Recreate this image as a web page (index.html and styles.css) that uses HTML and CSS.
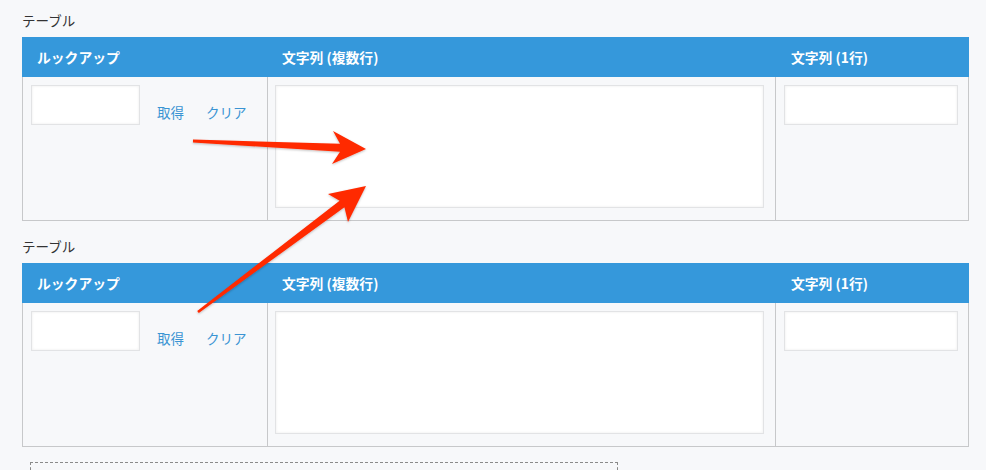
FILE: index.html
```html
<!DOCTYPE html>
<html lang="ja">
<head>
<meta charset="utf-8">
<link rel="stylesheet" href="styles.css">
</head>
<body>
<div class="page">
  <section class="subtable">
    <div class="label">テーブル</div>
    <div class="table">
      <div class="th">ルックアップ</div>
      <div class="th">文字列 (複数行)</div>
      <div class="th">文字列 (1行)</div>
      <div class="td lookup">
        <div class="input short"></div>
        <a class="link first">取得</a>
        <a class="link">クリア</a>
      </div>
      <div class="td mid"><div class="input area"></div></div>
      <div class="td last"><div class="input single"></div></div>
    </div>
  </section>
  <section class="subtable">
    <div class="label">テーブル</div>
    <div class="table">
      <div class="th">ルックアップ</div>
      <div class="th">文字列 (複数行)</div>
      <div class="th">文字列 (1行)</div>
      <div class="td lookup">
        <div class="input short"></div>
        <a class="link first">取得</a>
        <a class="link">クリア</a>
      </div>
      <div class="td mid"><div class="input area"></div></div>
      <div class="td last"><div class="input single"></div></div>
    </div>
  </section>
  <div class="dropzone"></div>
</div>
<svg class="arrows" width="986" height="470" viewBox="0 0 986 470">
  <defs>
    <filter id="sh" x="-10%" y="-10%" width="120%" height="130%">
      <feDropShadow dx="0" dy="1" stdDeviation="1" flood-color="#000" flood-opacity="0.25"/>
    </filter>
  </defs>
  <g fill="#ff2a00" filter="url(#sh)">
    <polygon points="193,139.6 340,143.8 333,131 366,149 332,164 340,151.8 193,142.4"/>
    <polygon points="197.2,310.9 339.6,200.8 328,194 366,186 348,222 344.4,207.2 198.8,313.1"/>
  </g>
</svg>
</body>
</html>
```
FILE: styles.css
```css
html, body {
  margin: 0;
  padding: 0;
  background: #f7f8fa;
  font-family: "Noto Sans CJK JP", "Noto Sans", sans-serif;
  color: #333;
  overflow: hidden;
  height: 470px;
}
.page {
  padding: 10px 17px 0 22px;
}
.subtable {
  margin-bottom: 15px;
}
.label {
  font-size: 13.5px;
  line-height: 20px;
  height: 20px;
  margin-bottom: 7px;
  color: #333;
}
.table {
  display: grid;
  grid-template-columns: 245px 509px 193px;
  width: 947px;
}
.th {
  background: #3598db;
  color: #fff;
  font-weight: bold;
  font-size: 13.8px;
  height: 40px;
  line-height: 40px;
  padding-left: 15px;
}
.td {
  border-bottom: 1px solid #c7c8ca;
  border-right: 1px solid #c7c8ca;
  box-sizing: content-box;
  padding-top: 8px;
  height: 135px;
}
.td.lookup {
  border-left: 1px solid #c7c8ca;
  width: 236px;
  padding-left: 8px;
  display: flex;
  align-items: flex-start;
}
.td.mid {
  width: 500px;
  padding-left: 8px;
}
.td.last {
  width: 184px;
  padding-left: 8px;
}
.input {
  background: #fff;
  border: 1px solid #e2e3e5;
  box-shadow: inset 0 0 3px rgba(0,0,0,0.08);
  box-sizing: border-box;
}
.input.short {
  width: 109px;
  height: 40px;
}
.input.area {
  width: 489px;
  height: 123px;
}
.input.single {
  width: 174px;
  height: 40px;
}
.link {
  color: #3a94d3;
  font-size: 13.5px;
  line-height: 20px;
  margin-top: 17px;
  margin-left: 22px;
  cursor: pointer;
}
.link.first {
  margin-left: 17px;
}
.dropzone {
  margin-left: 8px;
  margin-top: 4px;
  width: 588px;
  height: 60px;
  border: 1px dashed #8a8a8a;
  box-sizing: border-box;
}
.arrows {
  position: absolute;
  left: 0;
  top: 0;
  pointer-events: none;
}
```
